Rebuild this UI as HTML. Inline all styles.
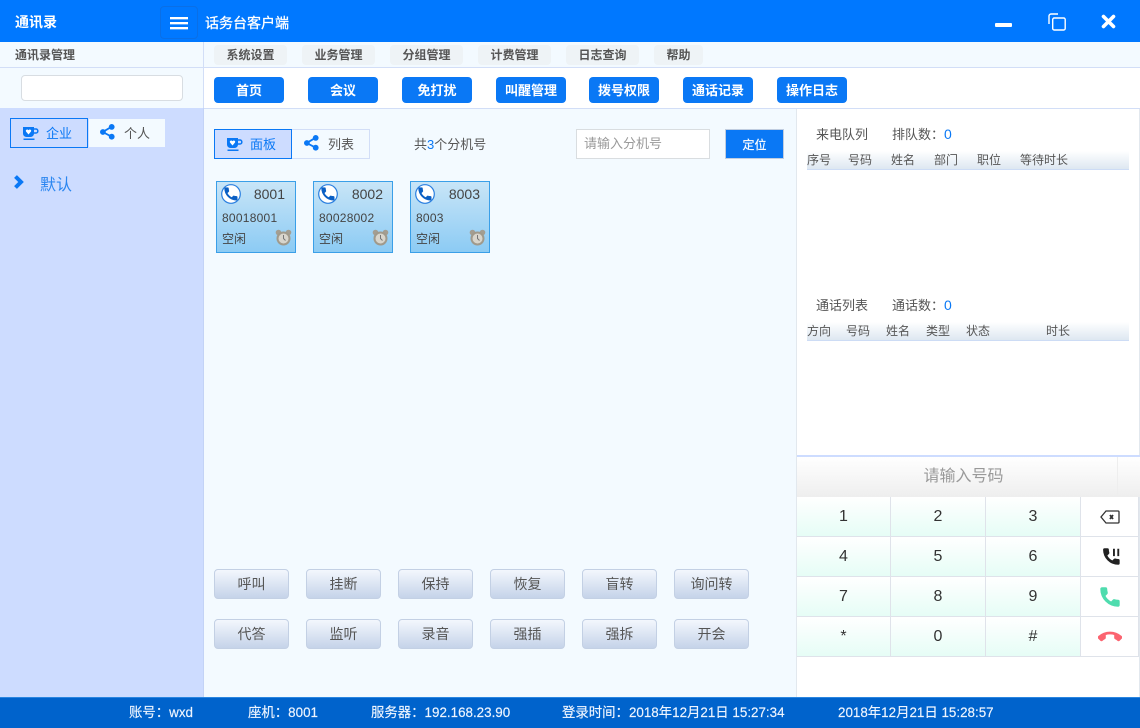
<!DOCTYPE html>
<html lang="zh-CN"><head><meta charset="utf-8"><title>话务台客户端</title>
<style>
*{box-sizing:border-box;margin:0;padding:0}
html,body{width:1140px;height:728px;overflow:hidden;background:#f3faff;font-family:"Liberation Sans","Noto Sans CJK SC",sans-serif;font-size:13px;color:#555}
.a{position:absolute}
.t{position:absolute;white-space:nowrap;line-height:18px}
.c{text-align:center}
.b{font-weight:bold}
.menu{position:absolute;top:45px;height:20px;background:#eef3f6;border-radius:4px;text-align:center;font-weight:bold;font-size:12px;line-height:20px;color:#555}
.tool{position:absolute;top:77px;width:70px;height:26px;background:#0a78f5;border-radius:4px;color:#fff;text-align:center;font-weight:bold;font-size:13px;line-height:27px}
.card{position:absolute;top:181px;width:80px;height:72px;border:1px solid #3a9fe8;background:linear-gradient(#c8e5f7,#8ccbf4);color:#444}
.card svg{position:absolute}
.btn{position:absolute;width:75px;height:30px;border:1px solid #c3d0e4;border-radius:4px;background:linear-gradient(#f3f7fd,#c5d3e9);text-align:center;line-height:28px;color:#555;font-size:14px}
.key{position:absolute;background:linear-gradient(#fff,#e6fdf6);text-align:center;font-size:16px;line-height:39px;color:#333}
.thead{position:absolute;left:807px;width:322px;height:19px;background:linear-gradient(#fff,#dde7f1);border-bottom:1px solid #cddcf5}
.foot{position:absolute;white-space:nowrap;line-height:18px;top:704px;color:#eef5ff;font-size:13.4px;-webkit-text-stroke:.15px #eef5ff}
.bar{position:absolute;left:170px;width:18px;height:2px;background:#fff;box-shadow:0 1px 0 rgba(255,255,255,.35)}
</style></head><body>

<div class="a" style="left:0;top:0;width:1140px;height:42px;background:#0078ff"></div>
<div class="t b" style="left:15px;top:13px;color:#fff;font-size:14px">通讯录</div>
<div class="a" style="left:160px;top:6px;width:38px;height:33px;border:1px solid #0a6fe6;border-radius:4px"></div>
<div class="bar" style="top:17px"></div>
<div class="bar" style="top:22px"></div>
<div class="bar" style="top:27px"></div>
<div class="t" style="left:205px;top:14px;color:#fff;font-size:14px;-webkit-text-stroke:.3px #fff">话务台客户端</div>
<div class="a" style="left:995px;top:23px;width:17px;height:3.5px;background:#fff;border-radius:1px"></div>
<svg class="a" style="left:1047px;top:13px" width="20" height="18" viewBox="0 0 20 18" fill="none" stroke="#fff" stroke-width="1.4"><path d="M2 11V3A2 2 0 0 1 4 1H11"/><rect x="5.700" y="5" width="12.500" height="12" rx="1.500"/></svg>
<svg class="a" style="left:1100px;top:13px" width="17" height="17" viewBox="0 0 17 17" stroke="#fff" stroke-width="3.600" stroke-linecap="round"><path d="M3.500 3.500L13.500 13.500M13.500 3.500L3.500 13.500"/></svg>

<div class="a" style="left:0;top:42px;width:1140px;height:26px;background:#f3faff;border-bottom:1px solid #d2def7"></div>
<div class="t b" style="left:15px;top:46px;font-size:12px">通讯录管理</div>
<div class="menu" style="left:214px;width:73px">系统设置</div>
<div class="menu" style="left:302px;width:73px">业务管理</div>
<div class="menu" style="left:390px;width:73px">分组管理</div>
<div class="menu" style="left:478px;width:73px">计费管理</div>
<div class="menu" style="left:566px;width:73px">日志查询</div>
<div class="menu" style="left:654px;width:49px">帮助</div>

<div class="a" style="left:204px;top:68px;width:936px;height:41px;background:#fff;border-bottom:1px solid #d2def7"></div>
<div class="a" style="left:21px;top:75px;width:162px;height:26px;background:#fff;border:1px solid #d8dde2;border-radius:4px"></div>
<div class="tool" style="left:214px">首页</div>
<div class="tool" style="left:308px">会议</div>
<div class="tool" style="left:402px">免打扰</div>
<div class="tool" style="left:496px">叫醒管理</div>
<div class="tool" style="left:589px">拨号权限</div>
<div class="tool" style="left:683px">通话记录</div>
<div class="tool" style="left:777px">操作日志</div>

<div class="a" style="left:0;top:108px;width:204px;height:589px;background:#cddcff;border-right:1px solid #c3d3f6"></div>
<div class="a" style="left:203px;top:42px;width:1px;height:66px;background:#d2def7"></div>
<div class="a" style="left:10px;top:118px;width:78px;height:30px;border:1px solid #0a78f5;background:#cddcff"></div>
<svg class="a" style="left:22px;top:126px" width="17" height="15" viewBox="0 0 17 15"><path fill="#0a78f5" d="M1 1H12V7.500A3.500 3.500 0 0 1 8.500 11H4.500A3.500 3.500 0 0 1 1 7.500Z"/><path d="M12 3H14A1.800 1.800 0 0 1 15.800 4.800V5.200A1.800 1.800 0 0 1 14 7H12" fill="none" stroke="#0a78f5" stroke-width="1.500"/><rect x="1.500" y="12.500" width="11" height="1.500" fill="#0a78f5"/><path d="M6.500 8.500L4 5.500A1.300 1.300 0 0 1 6.500 4.300A1.300 1.300 0 0 1 9 5.500Z" fill="#fff"/></svg>
<div class="t" style="left:46px;top:125px;color:#0a78f5">企业</div>
<div class="a" style="left:89px;top:119px;width:76px;height:28px;background:#f3faff"></div>
<svg class="a" style="left:100px;top:124px" width="16" height="16" viewBox="0 0 16 16"><path d="M11.700 2.700L2.700 8L11.700 12.700" fill="none" stroke="#0a78f5" stroke-width="1.800"/><circle cx="11.700" cy="2.900" r="2.900" fill="#0a78f5"/><circle cx="2.900" cy="8" r="2.900" fill="#0a78f5"/><circle cx="11.700" cy="12.700" r="2.900" fill="#0a78f5"/></svg>
<div class="t" style="left:124px;top:125px;color:#555">个人</div>
<svg class="a" style="left:13px;top:175px" width="12" height="14" viewBox="0 0 12 14" fill="none" stroke="#0a78f5" stroke-width="4"><path d="M2.500 1.500L8 7L2.500 12.500"/></svg>
<div class="t" style="left:40px;top:177px;color:#2a86f0;font-size:16px">默认</div>

<div class="a" style="left:214px;top:129px;width:78px;height:30px;border:1px solid #0a78f5;background:#cddcff"></div>
<svg class="a" style="left:226px;top:137px" width="17" height="15" viewBox="0 0 17 15"><path fill="#0a78f5" d="M1 1H12V7.500A3.500 3.500 0 0 1 8.500 11H4.500A3.500 3.500 0 0 1 1 7.500Z"/><path d="M12 3H14A1.800 1.800 0 0 1 15.800 4.800V5.200A1.800 1.800 0 0 1 14 7H12" fill="none" stroke="#0a78f5" stroke-width="1.500"/><rect x="1.500" y="12.500" width="11" height="1.500" fill="#0a78f5"/><path d="M6.500 8.500L4 5.500A1.300 1.300 0 0 1 6.500 4.300A1.300 1.300 0 0 1 9 5.500Z" fill="#fff"/></svg>
<div class="t" style="left:250px;top:136px;color:#0a78f5">面板</div>
<div class="a" style="left:292px;top:129px;width:78px;height:30px;border:1px solid #d2def7;border-left:0"></div>
<svg class="a" style="left:304px;top:135px" width="16" height="16" viewBox="0 0 16 16"><path d="M11.700 2.700L2.700 8L11.700 12.700" fill="none" stroke="#0a78f5" stroke-width="1.800"/><circle cx="11.700" cy="2.900" r="2.900" fill="#0a78f5"/><circle cx="2.900" cy="8" r="2.900" fill="#0a78f5"/><circle cx="11.700" cy="12.700" r="2.900" fill="#0a78f5"/></svg>
<div class="t" style="left:328px;top:136px">列表</div>
<div class="t" style="left:414px;top:136px">共<span style="color:#0a78f5">3</span>个分机号</div>
<div class="a" style="left:576px;top:129px;width:134px;height:30px;background:#fff;border:1px solid #d9dde0"></div>
<div class="t" style="left:584px;top:135px;color:#999">请输入分机号</div>
<div class="a c" style="left:725px;top:129px;width:59px;height:30px;background:#0a78f5;border:1px solid #c0cde0;color:#fff;font-size:12px;line-height:30px;-webkit-text-stroke:.2px #fff">定位</div>

<div class="card" style="left:216px">
<svg style="left:4px;top:2px" width="20" height="20" viewBox="0 0 20 20"><circle cx="10" cy="10" r="9.300" fill="#fff" stroke="#2a7fe0" stroke-width="1.200"/><path transform="translate(1.500 1.500) scale(.7)" fill="#0a5fc4" stroke="#0a5fc4" stroke-width=".8" d="M6.620 10.790c1.440 2.830 3.760 5.140 6.590 6.590l2.200-2.200c.27-.27.67-.36 1.020-.24 1.120.37 2.330.57 3.570.57.550 0 1 .45 1 1V20c0 .550-.45 1-1 1-9.390 0-17-7.610-17-17 0-.550.45-1 1-1h3.500c.550 0 1 .45 1 1 0 1.250.2 2.450.57 3.570.11.350.03.740-.25 1.020l-2.200 2.200z"/></svg>
<div class="t" style="right:10px;top:3px;font-size:14px">8001</div>
<div class="t" style="left:5px;top:27px;font-size:12px;letter-spacing:.25px">80018001</div>
<div class="t" style="left:5px;top:48px;font-size:12px">空闲</div>
<svg style="left:58px;top:47px" width="17" height="17" viewBox="0 0 17 17"><circle cx="3.500" cy="3.500" r="2.800" fill="#a39e92"/><circle cx="13.500" cy="3.500" r="2.800" fill="#a39e92"/><circle cx="8.500" cy="9.500" r="7" fill="#a09a8c"/><circle cx="8.500" cy="9.500" r="5" fill="#d8d5cc"/><path d="M8.500 6V9.500L10.500 11.500" fill="none" stroke="#777" stroke-width="1"/></svg>
</div>
<div class="card" style="left:313px">
<svg style="left:4px;top:2px" width="20" height="20" viewBox="0 0 20 20"><circle cx="10" cy="10" r="9.300" fill="#fff" stroke="#2a7fe0" stroke-width="1.200"/><path transform="translate(1.500 1.500) scale(.7)" fill="#0a5fc4" stroke="#0a5fc4" stroke-width=".8" d="M6.620 10.790c1.440 2.830 3.760 5.140 6.590 6.590l2.200-2.200c.27-.27.67-.36 1.020-.24 1.120.37 2.330.57 3.570.57.550 0 1 .45 1 1V20c0 .550-.45 1-1 1-9.390 0-17-7.610-17-17 0-.550.45-1 1-1h3.500c.550 0 1 .45 1 1 0 1.250.2 2.450.57 3.570.11.350.03.740-.25 1.020l-2.200 2.200z"/></svg>
<div class="t" style="right:9px;top:3px;font-size:14px">8002</div>
<div class="t" style="left:5px;top:27px;font-size:12px;letter-spacing:.25px">80028002</div>
<div class="t" style="left:5px;top:48px;font-size:12px">空闲</div>
<svg style="left:58px;top:47px" width="17" height="17" viewBox="0 0 17 17"><circle cx="3.500" cy="3.500" r="2.800" fill="#a39e92"/><circle cx="13.500" cy="3.500" r="2.800" fill="#a39e92"/><circle cx="8.500" cy="9.500" r="7" fill="#a09a8c"/><circle cx="8.500" cy="9.500" r="5" fill="#d8d5cc"/><path d="M8.500 6V9.500L10.500 11.500" fill="none" stroke="#777" stroke-width="1"/></svg>
</div>
<div class="card" style="left:410px">
<svg style="left:4px;top:2px" width="20" height="20" viewBox="0 0 20 20"><circle cx="10" cy="10" r="9.300" fill="#fff" stroke="#2a7fe0" stroke-width="1.200"/><path transform="translate(1.500 1.500) scale(.7)" fill="#0a5fc4" stroke="#0a5fc4" stroke-width=".8" d="M6.620 10.790c1.440 2.830 3.760 5.140 6.590 6.590l2.200-2.200c.27-.27.67-.36 1.020-.24 1.120.37 2.330.57 3.570.57.550 0 1 .45 1 1V20c0 .550-.45 1-1 1-9.390 0-17-7.610-17-17 0-.550.45-1 1-1h3.500c.550 0 1 .45 1 1 0 1.250.2 2.450.57 3.570.11.350.03.740-.25 1.020l-2.200 2.200z"/></svg>
<div class="t" style="right:9px;top:3px;font-size:14px">8003</div>
<div class="t" style="left:5px;top:27px;font-size:12px;letter-spacing:.25px">8003</div>
<div class="t" style="left:5px;top:48px;font-size:12px">空闲</div>
<svg style="left:58px;top:47px" width="17" height="17" viewBox="0 0 17 17"><circle cx="3.500" cy="3.500" r="2.800" fill="#a39e92"/><circle cx="13.500" cy="3.500" r="2.800" fill="#a39e92"/><circle cx="8.500" cy="9.500" r="7" fill="#a09a8c"/><circle cx="8.500" cy="9.500" r="5" fill="#d8d5cc"/><path d="M8.500 6V9.500L10.500 11.500" fill="none" stroke="#777" stroke-width="1"/></svg>
</div>

<div class="btn" style="left:214px;top:569px">呼叫</div>
<div class="btn" style="left:306px;top:569px">挂断</div>
<div class="btn" style="left:398px;top:569px">保持</div>
<div class="btn" style="left:490px;top:569px">恢复</div>
<div class="btn" style="left:582px;top:569px">盲转</div>
<div class="btn" style="left:674px;top:569px">询问转</div>
<div class="btn" style="left:214px;top:619px">代答</div>
<div class="btn" style="left:306px;top:619px">监听</div>
<div class="btn" style="left:398px;top:619px">录音</div>
<div class="btn" style="left:490px;top:619px">强插</div>
<div class="btn" style="left:582px;top:619px">强拆</div>
<div class="btn" style="left:674px;top:619px">开会</div>

<div class="a" style="left:796px;top:109px;width:344px;height:588px;background:#fff;border-left:1px solid #e2e8ee"></div>
<div class="a" style="left:1139px;top:109px;width:1px;height:588px;background:#e2e8ee"></div>
<div class="t" style="left:816px;top:126px">来电队列</div>
<div class="t" style="left:892px;top:125px">排队数：<span style="color:#0a78f5;font-size:14px">0</span></div>
<div class="thead" style="top:151px"></div>
<div class="t" style="left:807px;top:151px;font-size:12px">序号</div>
<div class="t" style="left:848px;top:151px;font-size:12px">号码</div>
<div class="t" style="left:891px;top:151px;font-size:12px">姓名</div>
<div class="t" style="left:934px;top:151px;font-size:12px">部门</div>
<div class="t" style="left:977px;top:151px;font-size:12px">职位</div>
<div class="t" style="left:1020px;top:151px;font-size:12px">等待时长</div>
<div class="t" style="left:816px;top:297px">通话列表</div>
<div class="t" style="left:892px;top:296px">通话数：<span style="color:#0a78f5;font-size:14px">0</span></div>
<div class="thead" style="top:322px"></div>
<div class="t" style="left:807px;top:322px;font-size:12px">方向</div>
<div class="t" style="left:846px;top:322px;font-size:12px">号码</div>
<div class="t" style="left:886px;top:322px;font-size:12px">姓名</div>
<div class="t" style="left:926px;top:322px;font-size:12px">类型</div>
<div class="t" style="left:966px;top:322px;font-size:12px">状态</div>
<div class="t" style="left:1046px;top:322px;font-size:12px">时长</div>

<div class="a" style="left:797px;top:455px;width:343px;height:2px;background:#cddcff"></div>
<div class="a" style="left:797px;top:457px;width:343px;height:40px;background:linear-gradient(#fff,#eee)"></div>
<div class="a" style="left:1117px;top:457px;width:1px;height:40px;background:#eee"></div>
<div class="t c" style="left:797px;top:466px;width:333px;color:#999;font-size:16px;line-height:22px">请输入号码</div>

<div class="a" style="left:797px;top:497px;width:342px;height:160px;background:#dfe3ea"></div>
<div class="key" style="left:797px;top:497px;width:93px;height:39px">1</div>
<div class="key" style="left:891px;top:497px;width:94px;height:39px">2</div>
<div class="key" style="left:986px;top:497px;width:94px;height:39px">3</div>
<div class="a" style="left:1081px;top:497px;width:57px;height:39px;background:#fff"></div>
<div class="key" style="left:797px;top:537px;width:93px;height:39px">4</div>
<div class="key" style="left:891px;top:537px;width:94px;height:39px">5</div>
<div class="key" style="left:986px;top:537px;width:94px;height:39px">6</div>
<div class="a" style="left:1081px;top:537px;width:57px;height:39px;background:#fff"></div>
<div class="key" style="left:797px;top:577px;width:93px;height:39px">7</div>
<div class="key" style="left:891px;top:577px;width:94px;height:39px">8</div>
<div class="key" style="left:986px;top:577px;width:94px;height:39px">9</div>
<div class="a" style="left:1081px;top:577px;width:57px;height:39px;background:#fff"></div>
<div class="key" style="left:797px;top:617px;width:93px;height:39px">*</div>
<div class="key" style="left:891px;top:617px;width:94px;height:39px">0</div>
<div class="key" style="left:986px;top:617px;width:94px;height:39px">#</div>
<div class="a" style="left:1081px;top:617px;width:57px;height:39px;background:#fff"></div>
<svg class="a" style="left:1100px;top:510px" width="20" height="14" viewBox="0 0 20 14" fill="none" stroke="#333" stroke-width="1.300"><path d="M6 1H18A1 1 0 0 1 19 2V12A1 1 0 0 1 18 13H6L1 7Z"/><path d="M10 5L13 9M13 5L10 9" stroke-width="1.800"/></svg>
<svg class="a" style="left:1101px;top:546px" width="19" height="21" viewBox="0 0 22 24"><path fill="#222" stroke="#222" stroke-width="1.200" d="M6.620 10.790c1.440 2.830 3.760 5.140 6.590 6.590l2.200-2.200c.27-.27.67-.36 1.020-.24 1.120.37 2.330.57 3.570.57.550 0 1 .45 1 1V20c0 .550-.45 1-1 1-9.390 0-17-7.610-17-17 0-.550.45-1 1-1h3.500c.550 0 1 .45 1 1 0 1.250.2 2.450.57 3.570.11.350.03.740-.25 1.020l-2.200 2.200z"/><path d="M15 3V11.500M20 3V11.500" stroke="#222" stroke-width="2.200"/></svg>
<svg class="a" style="left:1098px;top:585px" width="24" height="24" viewBox="0 0 24 24"><path fill="#4fdcae" stroke="#4fdcae" stroke-width="1.400" d="M6.620 10.790c1.440 2.830 3.760 5.140 6.590 6.590l2.200-2.200c.27-.27.67-.36 1.020-.24 1.120.37 2.330.57 3.570.57.550 0 1 .45 1 1V20c0 .550-.45 1-1 1-9.390 0-17-7.610-17-17 0-.550.45-1 1-1h3.500c.550 0 1 .45 1 1 0 1.250.2 2.450.57 3.570.11.350.03.740-.25 1.020l-2.200 2.200z"/></svg>
<svg class="a" style="left:1098px;top:625px" width="24" height="24" viewBox="0 0 24 24"><path fill="#fb6470" stroke="#fb6470" stroke-width=".8" d="M12 9c-1.600 0-3.150.25-4.600.72v3.100c0 .39-.23.74-.56.9-.98.49-1.870 1.120-2.660 1.850-.18.18-.43.28-.7.28-.28 0-.53-.11-.71-.29L.29 13.080c-.18-.17-.29-.42-.29-.7 0-.28.11-.53.29-.71C3.340 8.780 7.460 7 12 7s8.660 1.780 11.710 4.670c.18.18.29.43.29.71 0 .28-.11.53-.29.71l-2.480 2.480c-.18.18-.43.29-.71.29-.27 0-.52-.11-.7-.28-.79-.74-1.690-1.360-2.670-1.850-.33-.16-.56-.5-.56-.9v-3.100C15.150 9.250 13.600 9 12 9z"/></svg>

<div class="a" style="left:0;top:697px;width:1140px;height:31px;background:#0063cc;border-top:1px solid #2a86e0"></div>
<div class="foot" style="left:129px">账号：wxd</div>
<div class="foot" style="left:248px">座机：8001</div>
<div class="foot" style="left:371px">服务器：192.168.23.90</div>
<div class="foot" style="left:562px">登录时间：2018年12月21日 15:27:34</div>
<div class="foot" style="left:838px">2018年12月21日 15:28:57</div>
</body></html>
